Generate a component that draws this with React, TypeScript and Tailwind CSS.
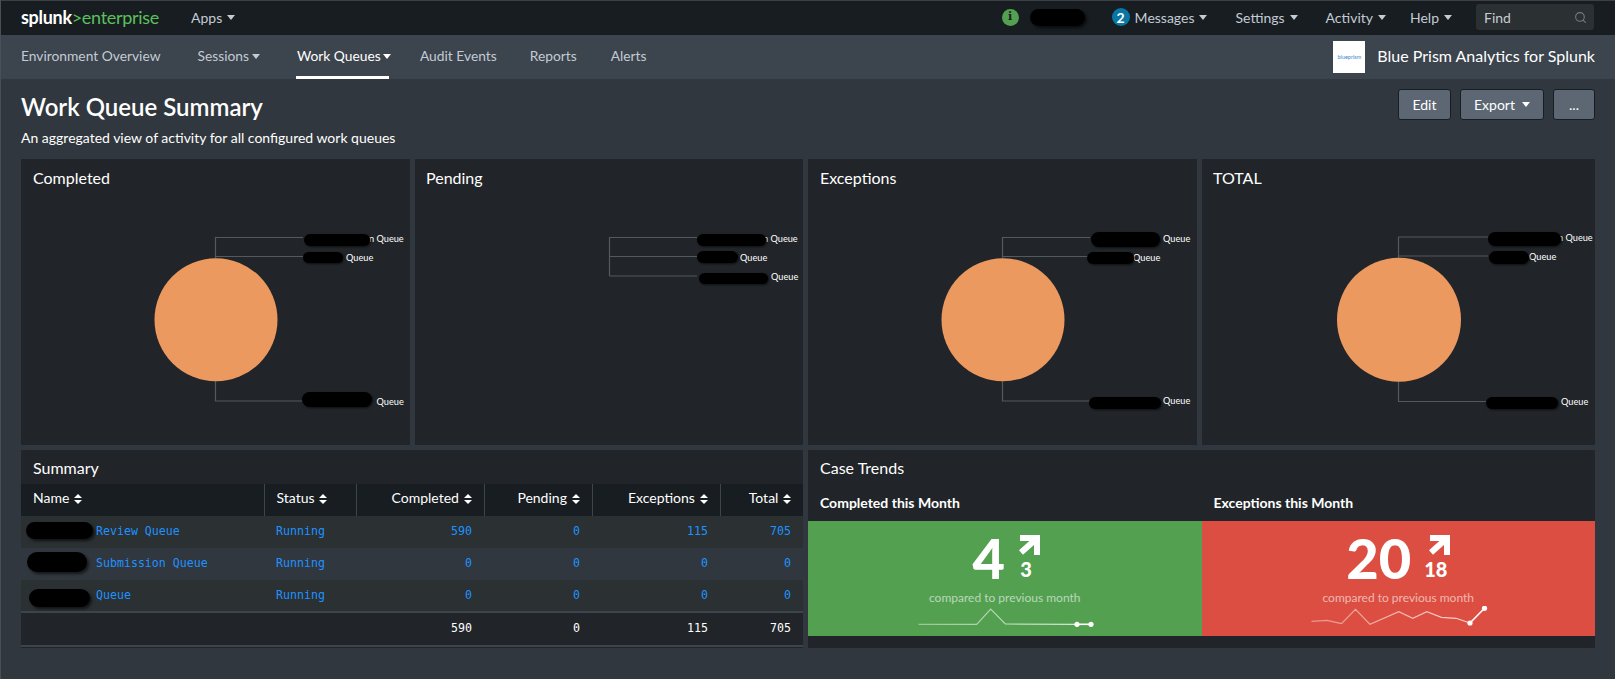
import { Search } from 'lucide-react'

interface Blob {
  x: number
  y: number
  w: number
  h: number
}

interface Label {
  x: number
  y: number
  text: string
}

interface ChartPanel {
  title: string
  titleClass: string
  panelX: number
  width: number
  circle?: { cx: number; cy: number; r: number }
  lines: string
  blobs: Blob[]
  labels: Label[]
}

const chartPanels: ChartPanel[] = [
  {
    title: 'Completed',
    titleClass: 'pl-[12px]',
    panelX: 21,
    width: 389,
    circle: { cx: 216, cy: 319.7, r: 61.5 },
    lines: 'M303 237.5H215.5V258M303 256.5H215.5M215.5 381V401H302',
    blobs: [
      { x: 304, y: 234, w: 66, h: 12 },
      { x: 303, y: 252, w: 40, h: 11 },
      { x: 302, y: 392, w: 70, h: 15 },
    ],
    labels: [
      { x: 369, y: 241.5, text: 'n Queue' },
      { x: 346, y: 261, text: 'Queue' },
      { x: 376.5, y: 405, text: 'Queue' },
    ],
  },
  {
    title: 'Pending',
    titleClass: 'pl-[11px]',
    panelX: 415,
    width: 388,
    lines: 'M697 237.5H609.5V276M697 256.5H609.5M697 276H609.5',
    blobs: [
      { x: 697, y: 234, w: 69, h: 12 },
      { x: 697, y: 251, w: 41, h: 12 },
      { x: 699, y: 273, w: 69, h: 11 },
    ],
    labels: [
      { x: 763, y: 241.5, text: 'n Queue' },
      { x: 740, y: 261, text: 'Queue' },
      { x: 771, y: 280, text: 'Queue' },
    ],
  },
  {
    title: 'Exceptions',
    titleClass: 'pl-[12px]',
    panelX: 808,
    width: 389,
    circle: { cx: 1003, cy: 319.7, r: 61.5 },
    lines: 'M1090 237.5H1002.5V258M1090 256.5H1002.5M1002.5 381V401H1090',
    blobs: [
      { x: 1091, y: 232, w: 69, h: 15 },
      { x: 1087, y: 252, w: 47, h: 12 },
      { x: 1089, y: 397, w: 72, h: 12 },
    ],
    labels: [
      { x: 1163, y: 241.5, text: 'Queue' },
      { x: 1133, y: 260.5, text: 'Queue' },
      { x: 1163, y: 404, text: 'Queue' },
    ],
  },
  {
    title: 'TOTAL',
    titleClass: 'pl-[11px]',
    panelX: 1202,
    width: 393,
    circle: { cx: 1399, cy: 319.7, r: 62 },
    lines: 'M1488 237H1398.5V258M1488 256H1398.5M1398.5 381V401.5H1486',
    blobs: [
      { x: 1488, y: 232, w: 73, h: 14 },
      { x: 1489, y: 251, w: 40, h: 13 },
      { x: 1486, y: 397, w: 72, h: 12 },
    ],
    labels: [
      { x: 1558, y: 240.5, text: 'n Queue' },
      { x: 1529, y: 260, text: 'Queue' },
      { x: 1561, y: 405, text: 'Queue' },
    ],
  },
]

const rows = [
  { name: 'Review Queue', blob: 'left-[5px] top-[6px] w-[67px] h-[17px]', completed: 590, pending: 0, exceptions: 115, total: 705 },
  { name: 'Submission Queue', blob: 'left-[6px] top-[4px] w-[60px] h-[20px]', completed: 0, pending: 0, exceptions: 0, total: 0 },
  { name: 'Queue', blob: 'left-[8px] top-[9px] w-[61px] h-[18px]', completed: 0, pending: 0, exceptions: 0, total: 0 },
]

const topLinks = [
  { label: 'Settings', className: 'ml-[28px]' },
  { label: 'Activity', className: 'ml-[28px]' },
  { label: 'Help', className: 'ml-[24px]' },
]

function Caret({ className = '' }: { className?: string }) {
  return (
    <svg width="8" height="5" viewBox="0 0 8 5" className={`shrink-0 ${className}`}>
      <path d="M0 0H8L4 5Z" fill="currentColor" />
    </svg>
  )
}

function SortIcon() {
  return (
    <svg width="8" height="10" viewBox="0 0 8 10" className="ml-[1px] inline-block">
      <path d="M0 4L4 0L8 4ZM0 6H8L4 10Z" fill="currentColor" />
    </svg>
  )
}

function TrendArrow() {
  return (
    <svg width="22" height="20" viewBox="0 0 22 20" className="block">
      <path d="M2 3H19V20" fill="none" stroke="#fff" strokeWidth="6" />
      <path d="M17 5L3 17.5" fill="none" stroke="#fff" strokeWidth="6" />
    </svg>
  )
}

function Chart({ panel }: { panel: ChartPanel }) {
  return (
    <section className="bg-[#212529] h-full" style={{ width: panel.width }}>
      <h2 className={`h-[38px] ${panel.titleClass} pt-[9px] text-[16px] leading-[20px] text-white`}>{panel.title}</h2>
      <svg
        width={panel.width}
        height="248"
        viewBox={`${panel.panelX} 197 ${panel.width} 248`}
        className="block"
      >
        <path d={panel.lines} fill="none" stroke="#54595e" strokeWidth="1.2" />
        {panel.circle && <circle cx={panel.circle.cx} cy={panel.circle.cy} r={panel.circle.r} fill="#ec9960" />}
        {panel.labels.map((l) => (
          <text key={l.x} x={l.x} y={l.y} fill="#fff" fontSize="9.2">
            {l.text}
          </text>
        ))}
        {panel.blobs.map((b) => (
          <rect
            key={b.x}
            x={b.x}
            y={b.y}
            width={b.w}
            height={b.h}
            rx={b.h / 2}
            fill="#000"
            className="[filter:drop-shadow(1px_1px_1px_rgba(0,0,0,0.6))]"
          />
        ))}
      </svg>
    </section>
  )
}

interface Tile {
  title: string
  bg: string
  value: number
  delta: number
  line: string
  lastSeg: string
  dots: [number, number][]
}

const tiles: Tile[] = [
  {
    title: 'Completed this Month',
    bg: 'bg-[#53a051]',
    value: 4,
    delta: 3,
    line: '3.5,18.3 61.7,18.3 75.7,3 90.3,18 162,18.3',
    lastSeg: 'M162 18.3L176 18.3',
    dots: [[162, 18.3], [176, 18.3]],
  },
  {
    title: 'Exceptions this Month',
    bg: 'bg-[#dc4e41]',
    value: 20,
    delta: 18,
    line: '3.5,15.3 19,14.3 33.5,17.7 47.5,3.3 62,18.3 90.8,5.7 104.8,12.3 118.8,5.7 133.4,11.3 148,12.3 162,17',
    lastSeg: 'M162 17L176.5 2.3',
    dots: [[162, 17], [176.5, 2.3]],
  },
]

function SingleValue({ tile, index }: { tile: Tile; index: number }) {
  return (
    <div className="flex flex-col">
      <h3 className="h-[37px] pl-[12px] pt-[9px] text-[14px] leading-[20px] font-bold text-white">{tile.title}</h3>
      <div className={`${tile.bg} h-[115px] flex flex-col items-center pt-[14px]`}>
        <div className="flex items-start gap-[13px] h-[46px] pl-[3px]">
          <span className="text-[56px] leading-[46px] font-black text-white">{tile.value}</span>
          <div className="flex flex-col items-center">
            <TrendArrow />
            <span className="mt-[4px] pr-[6px] text-[20px] leading-[21px] font-black text-white">{tile.delta}</span>
          </div>
        </div>
        <p className="mt-[9px] text-[12px] leading-[16px] text-white/60">compared to previous month</p>
        <svg width="180" height="22" viewBox="0 0 180 22" className="block">
          <defs>
            <linearGradient id={`fade${index}`} x1="0" x2="180" y1="0" y2="0" gradientUnits="userSpaceOnUse">
              <stop offset="0" stopColor="#fff" stopOpacity="0.4" />
              <stop offset="1" stopColor="#fff" stopOpacity="0.8" />
            </linearGradient>
          </defs>
          <polyline points={tile.line} fill="none" stroke={`url(#fade${index})`} strokeWidth="1.2" />
          <path d={tile.lastSeg} stroke="#fff" strokeWidth="1.6" fill="none" />
          {tile.dots.map(([x, y]) => (
            <circle key={x} cx={x} cy={y} r="2.6" fill="#fff" />
          ))}
        </svg>
      </div>
    </div>
  )
}

export default function App() {
  const num = 'px-[12px] text-right align-middle'
  const head = 'px-[12px] pb-[5px] font-normal text-[14px] border-l border-[#3c444d] text-right'

  return (
    <div className="min-h-screen h-[679px] overflow-hidden bg-[#31373e] font-['Lato',sans-serif] border-l border-[#4a4f55]">
      {/* Top bar */}
      <header className="h-[35px] bg-[#171d21] border-t border-[#3d4044] flex items-center pl-[20px] pr-[21px] pb-[2px] text-[14px] text-[#c3cbd4]">
        <div className="text-[18px] leading-none tracking-[-0.3px] whitespace-nowrap w-[136px]">
          <span className="font-bold text-white">splunk</span>
          <span className="text-[#5cc05c]">&gt;enterprise</span>
        </div>
        <button type="button" className="ml-[34px] flex items-center gap-[5px]">
          Apps <Caret />
        </button>

        <div className="ml-auto flex items-center">
          <span className="w-[17px] h-[17px] rounded-full bg-[#53a051] text-[#171d21] text-[11px] font-bold flex items-center justify-center font-['DejaVu_Serif',serif]">
            i
          </span>
          <span className="ml-[11px] w-[55px] h-[17px] rounded-full bg-black shadow-[2px_2px_3px_rgba(0,0,0,0.6)]" />
          <span className="ml-[27px] w-[18px] h-[18px] rounded-full bg-[#0877a6] text-white text-[14px] font-bold flex items-center justify-center">
            2
          </span>
          <button type="button" className="ml-[5px] flex items-center gap-[5px]">
            Messages <Caret />
          </button>
          {topLinks.map((item) => (
            <button key={item.label} type="button" className={`${item.className} flex items-center gap-[5px]`}>
              {item.label} <Caret />
            </button>
          ))}
          <div className="ml-[24px] w-[118px] h-[26px] bg-[#2b3033] rounded-[3px] flex items-center justify-between pl-[8px] pr-[7px]">
            <span>Find</span>
            <Search size={13} className="text-[#727c87]" />
          </div>
        </div>
      </header>

      {/* App nav */}
      <nav className="h-[44px] bg-[#3c444d] flex items-stretch pl-[20px] pr-[20px] text-[13.8px] text-[#c3cbd4]">
        <a className="flex items-center pb-[2px]">Environment Overview</a>
        <a className="ml-[37px] flex items-center gap-[3px] pb-[2px]">
          Sessions <Caret />
        </a>
        <a className="ml-[36px] px-[1px] w-[93px] whitespace-nowrap flex items-center gap-[2px] text-white border-b-[3px] border-white pt-[1px]">
          Work Queues <Caret />
        </a>
        <a className="ml-[31px] flex items-center pb-[2px]">Audit Events</a>
        <a className="ml-[33px] flex items-center pb-[2px]">Reports</a>
        <a className="ml-[34px] flex items-center pb-[2px]">Alerts</a>
        <div className="ml-auto flex items-center">
          <div className="w-[32px] h-[32px] bg-white flex items-center justify-center text-[5.5px] text-[#3a87c8] whitespace-nowrap">
            blueprism
          </div>
          <span className="ml-[12px] pb-[2px] text-[16px] text-white">Blue Prism Analytics for Splunk</span>
        </div>
      </nav>

      {/* Title row */}
      <div className="h-[80px] px-[20px] flex justify-between">
        <div>
          <h1 className="mt-[13px] text-[24px] leading-[30px] font-semibold text-white">Work Queue Summary</h1>
          <p className="mt-[6px] text-[14px] leading-[20px] text-white">An aggregated view of activity for all configured work queues</p>
        </div>
        <div className="pt-[10px] flex items-start gap-[9px] text-[14px] text-white">
          <button type="button" className="h-[31px] w-[53px] rounded-[3px] bg-[#5c6773] border border-[#171d21]">
            Edit
          </button>
          <button type="button" className="h-[31px] w-[84px] rounded-[3px] bg-[#5c6773] border border-[#171d21] flex items-center justify-center gap-[7px]">
            Export <Caret />
          </button>
          <button type="button" className="h-[31px] w-[42px] rounded-[3px] bg-[#5c6773] border border-[#171d21]">
            ...
          </button>
        </div>
      </div>

      <main className="pl-[20px] pr-[20px] flex flex-col gap-[5px]">
        {/* Pie charts */}
        <div className="h-[286px] flex gap-[5px]">
          {chartPanels.map((p) => (
            <Chart key={p.title} panel={p} />
          ))}
        </div>

        <div className="h-[198px] flex gap-[5px]">
          {/* Summary table */}
          <section className="w-[782px] bg-[#212529]">
            <h2 className="h-[34px] pl-[12px] pt-[8px] text-[16px] leading-[20px] text-white">Summary</h2>
            <table className="w-full table-fixed text-white">
              <colgroup>
                <col className="w-[243px]" />
                <col className="w-[92px]" />
                <col className="w-[128px]" />
                <col className="w-[108px]" />
                <col className="w-[128px]" />
                <col className="w-[83px]" />
              </colgroup>
              <thead>
                <tr className="h-[32px] bg-[#171d21]">
                  <th className="pl-[12px] pb-[5px] font-normal text-[14px] text-left">
                    Name <SortIcon />
                  </th>
                  <th className="pl-[12px] pb-[5px] font-normal text-[14px] text-left border-l border-[#3c444d]">
                    Status <SortIcon />
                  </th>
                  <th className={head}>
                    Completed <SortIcon />
                  </th>
                  <th className={head}>
                    Pending <SortIcon />
                  </th>
                  <th className={head}>
                    Exceptions <SortIcon />
                  </th>
                  <th className={head}>
                    Total <SortIcon />
                  </th>
                </tr>
              </thead>
              <tbody className="font-['DejaVu_Sans_Mono',monospace] text-[11.6px] text-[#1e93ff]">
                {rows.map((r, i) => (
                  <tr key={r.name} className={`h-[32px] ${i % 2 === 0 ? 'bg-[#2b3033]' : 'bg-[#31373e]'}`}>
                    <td className="relative pl-[75px]">
                      <span className={`absolute ${r.blob} rounded-full bg-black shadow-[2px_2px_3px_rgba(0,0,0,0.6)]`} />
                      {r.name}
                    </td>
                    <td className="pl-[12px]">Running</td>
                    <td className={num}>{r.completed}</td>
                    <td className={num}>{r.pending}</td>
                    <td className={num}>{r.exceptions}</td>
                    <td className={num}>{r.total}</td>
                  </tr>
                ))}
              </tbody>
              <tfoot className="font-['DejaVu_Sans_Mono',monospace] text-[11.6px] text-white">
                <tr className="h-[34px] border-t-2 border-b-2 border-[#3c444d]">
                  <td />
                  <td />
                  <td className={num}>590</td>
                  <td className={num}>0</td>
                  <td className={num}>115</td>
                  <td className={num}>705</td>
                </tr>
              </tfoot>
            </table>
          </section>

          {/* Case trends */}
          <section className="w-[787px] bg-[#212529]">
            <h2 className="h-[34px] pl-[12px] pt-[8px] text-[16px] leading-[20px] text-white">Case Trends</h2>
            <div className="grid grid-cols-2">
              {tiles.map((t, i) => (
                <SingleValue key={t.title} tile={t} index={i} />
              ))}
            </div>
          </section>
        </div>
      </main>
    </div>
  )
}
